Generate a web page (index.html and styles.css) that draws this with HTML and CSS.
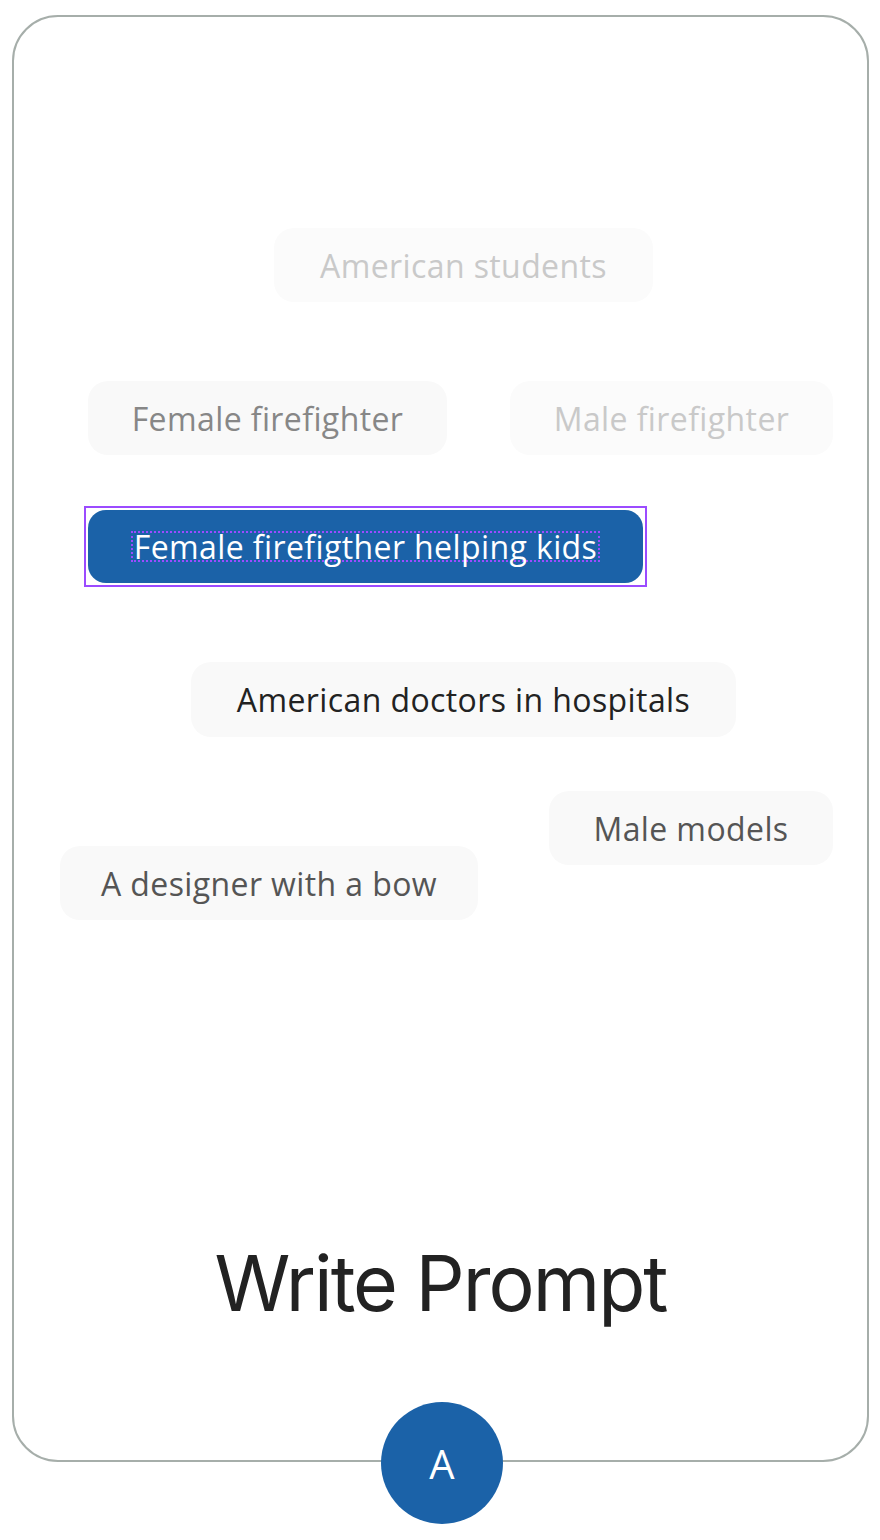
FILE: index.html
```html
<!DOCTYPE html>
<html lang="en">
<head>
<meta charset="utf-8">
<title>Write Prompt</title>
<link rel="stylesheet" href="styles.css">
</head>
<body>
<div class="card">
  <div class="cloud">
    <div class="row row-1">
      <div class="chip chip-faint w-students">American students</div>
    </div>
    <div class="row row-2">
      <div class="chip chip-mid w-female">Female firefighter</div>
      <div class="chip chip-faint w-male">Male firefighter</div>
    </div>
    <div class="row row-3">
      <div class="selected-frame">
        <div class="chip chip-selected w-selected"><span class="text-box">Female firefigther helping kids</span></div>
      </div>
    </div>
    <div class="row row-4">
      <div class="chip chip-dark w-doctors">American doctors in hospitals</div>
    </div>
    <div class="row row-5">
      <div class="chip chip-grey w-models">Male models</div>
    </div>
    <div class="row row-6">
      <div class="chip chip-grey w-designer">A designer with a bow</div>
    </div>
  </div>
  <h1 class="title">Write Prompt</h1>
  <div class="avatar">A</div>
</div>
</body>
</html>
```
FILE: styles.css
```css
* { box-sizing: border-box; }
html, body { margin: 0; padding: 0; background: #ffffff; }
body {
  font-family: "Open Sans", "Noto Sans", sans-serif;
  min-height: 1540px;
  padding-top: 15px;
}

.card {
  position: relative;
  margin: 0 0 0 12px;
  width: 857px;
  height: 1447px;
  border: 2px solid #a6aeaa;
  border-radius: 46px;
  display: flex;
  flex-direction: column;
}

.cloud { display: flex; flex-direction: column; }

.row { display: flex; }
.row-1 { margin-top: 211px; padding-left: 260px; }
.row-2 { margin-top: 79px; padding-left: 74px; gap: 63px; }
.row-3 { margin-top: 51px; padding-left: 70px; }
.row-4 { margin-top: 75px; padding-left: 177px; }
.row-5 { margin-top: 54px; padding-left: 535px; }
.row-6 { margin-top: -19px; padding-left: 46px; }

.chip {
  height: 74px;
  border-radius: 20px;
  background: #f9f9f9;
  display: flex;
  align-items: center;
  justify-content: center;
  font-size: 32px;
  letter-spacing: 0.4px;
  white-space: nowrap;
}
.chip-faint { color: #c9c9c9; background: #fbfbfb; }
.chip-mid { color: #878787; }
.chip-grey { color: #555555; }
.chip-dark { color: #222222; height: 75px; }

.w-students { width: 379px; }
.w-female { width: 359px; }
.w-male { width: 323px; }
.w-selected { width: 555px; }
.w-doctors { width: 545px; }
.w-models { width: 284px; }
.w-designer { width: 418px; }

.selected-frame {
  border: 2px solid #9b4bff;
  padding: 2px;
}
.chip-selected {
  height: 73px;
  background: #1b62a8;
  color: #ffffff;
  border-radius: 18px;
}
.text-box {
  border: 2px dotted #9b4bff;
  line-height: 27px;
  padding: 0 1px;
}

.title {
  margin: auto 0 0 0;
  padding-bottom: 138px;
  text-align: center;
  font-family: "Inter", sans-serif;
  font-weight: 400;
  font-size: 77px;
  line-height: 1;
  color: #222222;
  letter-spacing: -2px;
}

.avatar {
  position: absolute;
  left: 367px;
  bottom: -64px;
  width: 122px;
  height: 122px;
  border-radius: 50%;
  background: #1b62a8;
  color: #ffffff;
  display: flex;
  align-items: center;
  justify-content: center;
  font-family: "Open Sans", sans-serif;
  font-size: 40px;
}
```
